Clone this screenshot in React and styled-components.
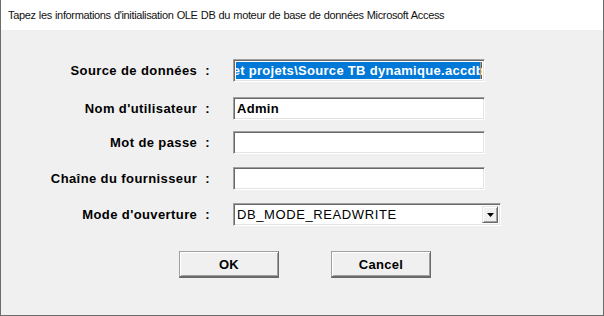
import styled, { createGlobalStyle } from "styled-components"

const GlobalStyle = createGlobalStyle`
    html, body {
        margin: 0;
        padding: 0;
        background: #f0f0f0;
    }
    * {
        box-sizing: border-box;
    }
`

const rows = [
    { label: "Source de données", space: 29, kind: "selected", value: "C:\\Users\\Admin\\Documents\\Budget projets\\Source TB dynamique.accdb" },
    { label: "Nom d'utilisateur", space: 15, kind: "text", value: "Admin" },
    { label: "Mot de passe", space: 11, kind: "text", value: "" },
    { label: "Chaîne du fournisseur", space: 13, kind: "text", value: "" },
    { label: "Mode d'ouverture", space: 13, kind: "select", value: "DB_MODE_READWRITE" },
]

export default () => {
    return (
        <>
            <GlobalStyle />
            <Window>
                <Header>Tapez les informations d'initialisation OLE DB du moteur de base de données Microsoft Access</Header>
                <Form>
                    {rows.map((row) => (
                        <Row key={row.label} $space={row.space}>
                            <Label>{row.label}&nbsp;&nbsp;:</Label>
                            {row.kind === "select" ? (
                                <Select>
                                    <SelectValue>{row.value}</SelectValue>
                                    <DropButton>
                                        <svg width="7" height="4" viewBox="0 0 7 4">
                                            <path d="M0 0 H7 L3.5 4 Z" fill="#000" />
                                        </svg>
                                    </DropButton>
                                </Select>
                            ) : (
                                <Input>
                                    {row.kind === "selected" ? (
                                        <Selection>
                                            <SelectedText>{row.value}</SelectedText>
                                            <Caret />
                                        </Selection>
                                    ) : (
                                        <InputText>{row.value}</InputText>
                                    )}
                                </Input>
                            )}
                        </Row>
                    ))}
                </Form>
                <Buttons>
                    <Button>OK</Button>
                    <Button>Cancel</Button>
                </Buttons>
            </Window>
        </>
    )
}

const Window = styled.div`
    width: 604px;
    height: 316px;
    background-color: #f0f0f0;
    border: 1px solid #6b6b6b;
    border-top: none;
    display: flex;
    flex-direction: column;
    font-family: "Liberation Sans", Arial, sans-serif;
    color: #000;
`

const Header = styled.div`
    height: 30px;
    background-color: #fff;
    padding: 0 0 0 7px;
    display: flex;
    align-items: center;
    font-size: 11px;
    letter-spacing: -0.35px;
    word-spacing: 0.5px;
    color: #111;
`

const Form = styled.div`
    display: flex;
    flex-direction: column;
`

const Row = styled.div`
    display: flex;
    align-items: center;
    height: 23px;
    margin-top: ${({ $space }) => $space}px;
`

const Label = styled.div`
    width: 209px;
    text-align: right;
    font-size: 13px;
    font-weight: bold;
    letter-spacing: 0.4px;
    margin-right: 23px;
    white-space: nowrap;
`

const Input = styled.div`
    width: 252px;
    height: 23px;
    background: #fff;
    border-top: 1px solid #a0a0a0;
    border-left: 1px solid #a0a0a0;
    border-right: 1px solid #fff;
    border-bottom: 1px solid #fff;
    box-shadow: inset 1px 1px 0 #696969, inset -1px -1px 0 #e3e3e3;
    padding: 2px;
    display: flex;
    align-items: stretch;
    overflow: hidden;
`

const Selection = styled.div`
    flex: 1;
    display: flex;
    justify-content: flex-end;
    align-items: center;
    overflow: hidden;
    background-color: #0078d7;
    position: relative;
`

const SelectedText = styled.span`
    color: #fff;
    font-size: 13px;
    font-weight: bold;
    letter-spacing: 0.3px;
    white-space: nowrap;
    margin-right: -2px;
`

const Caret = styled.div`
    position: absolute;
    right: 1px;
    top: 0;
    bottom: 0;
    width: 1px;
    background: #f08c1e;
`

const InputText = styled.span`
    font-size: 13px;
    font-weight: bold;
    letter-spacing: 0.3px;
    line-height: 17px;
    padding-left: 1px;
    white-space: nowrap;
`

const Select = styled(Input)`
    width: 268px;
    padding: 2px 2px 2px 3px;
    align-items: center;
    justify-content: space-between;
`

const SelectValue = styled.span`
    font-size: 13px;
    letter-spacing: 0.6px;
    white-space: nowrap;
`

const DropButton = styled.div`
    width: 16px;
    height: 17px;
    background: #f0f0f0;
    border-top: 1px solid #e3e3e3;
    border-left: 1px solid #e3e3e3;
    border-right: 1px solid #696969;
    border-bottom: 1px solid #696969;
    box-shadow: inset 1px 1px 0 #fff, inset -1px -1px 0 #a0a0a0;
    display: flex;
    align-items: center;
    justify-content: center;
`

const Buttons = styled.div`
    display: flex;
    gap: 52px;
    padding-left: 178px;
    margin-top: 25px;
`

const Button = styled.div`
    width: 100px;
    height: 27px;
    background: #f0f0f0;
    border-top: 1px solid #a0a0a0;
    border-left: 1px solid #a0a0a0;
    border-right: 1px solid #696969;
    border-bottom: 2px solid #696969;
    box-shadow: inset 1px 1px 0 #fff, inset -1px -1px 0 #a0a0a0;
    display: flex;
    align-items: center;
    justify-content: center;
    font-size: 13px;
    font-weight: bold;
    letter-spacing: 0.3px;
`
